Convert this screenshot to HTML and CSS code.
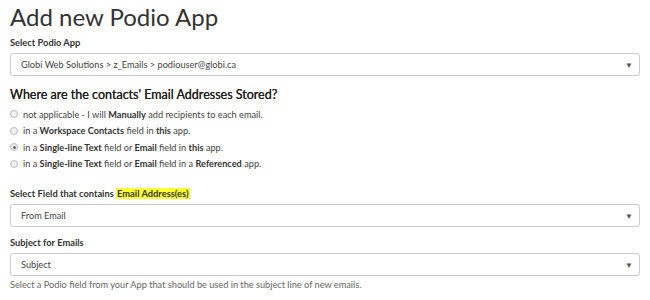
FILE: index.html
```html
<!DOCTYPE html>
<html lang="en">

<head>
    <meta charset="UTF-8">
    <title>Add new Podio App</title>
    <link rel="stylesheet" href="styles.css">
</head>

<body>

    <h1>Add new Podio App</h1>

    <div class="field">
        <label class="field-label">Select Podio App</label>
        <div class="select">
            <span>Globi Web Solutions &gt; z_Emails &gt; podiouser@globi.ca</span>
            <span class="arrow">&#9660;</span>
        </div>
    </div>

    <div class="question">Where are the contacts' Email Addresses Stored?</div>

    <div class="options">
        <div class="option">
            <span class="radio"></span>
            <span>not applicable - I will <b>Manually</b> add recipients to each email.</span>
        </div>
        <div class="option">
            <span class="radio"></span>
            <span>in a <b>Workspace Contacts</b> field in <b>this</b> app.</span>
        </div>
        <div class="option">
            <span class="radio checked"></span>
            <span>in a <b>Single-line Text</b> field or <b>Email</b> field in <b>this</b> app.</span>
        </div>
        <div class="option">
            <span class="radio"></span>
            <span>in a <b>Single-line Text</b> field or <b>Email</b> field in a <b>Referenced</b> app.</span>
        </div>
    </div>

    <div class="field">
        <label class="field-label">Select Field that contains <mark>Email Address(es)</mark></label>
        <div class="select">
            <span>From Email</span>
            <span class="arrow">&#9660;</span>
        </div>
    </div>

    <div class="field">
        <label class="field-label">Subject for Emails</label>
        <div class="select">
            <span>Subject</span>
            <span class="arrow">&#9660;</span>
        </div>
        <div class="help">Select a Podio field from your App that should be used in the subject line of new emails.</div>
    </div>

</body>

</html>
```

FILE: styles.css
```css
body {
    font-family: Lato, "Open Sans", sans-serif;
    color: #333;
    margin: 0;
    padding: 2px 10px 0 10px;
}

h1 {
    font-size: 24px;
    font-weight: 400;
    line-height: 30px;
    margin: 0 0 3px 0;
    color: #333;
}

.field {
    margin-bottom: 8px;
}

.field-label {
    display: block;
    font-size: 9.3px;
    font-weight: 700;
    line-height: 14px;
    padding-top: 1px;
    margin-bottom: 3px;
    color: #333;
}

.field-label mark {
    background: #ffff33;
    color: #333;
    padding: 0 1px;
}

.select {
    display: flex;
    justify-content: space-between;
    align-items: center;
    height: 21px;
    border: 1px solid #ccc;
    border-radius: 3px;
    padding: 0 6px 0 10px;
    font-size: 9.2px;
    color: #444;
}

.arrow {
    font-size: 8px;
    color: #555;
}

.question {
    font-size: 12.5px;
    font-weight: 400;
    line-height: 17px;
    padding-top: 2px;
    color: #222;
    text-shadow: 0 0 0.2px #222;
}

.options {
    margin: 3px 0 14px 0;
}

.option {
    display: flex;
    align-items: center;
    gap: 5px;
    height: 16.5px;
    font-size: 9.2px;
    color: #444;
}

.option b {
    font-weight: 700;
    color: #333;
}

.radio {
    width: 6px;
    height: 6px;
    border: 1px solid #bbb;
    border-radius: 50%;
    background: #f0f0f0;
    position: relative;
}

.radio.checked::after {
    content: "";
    position: absolute;
    left: 1.5px;
    top: 1.5px;
    width: 3px;
    height: 3px;
    border-radius: 50%;
    background: #666;
}

.help {
    font-size: 9.2px;
    line-height: 12px;
    color: #666;
    margin-top: 3px;
}
```
